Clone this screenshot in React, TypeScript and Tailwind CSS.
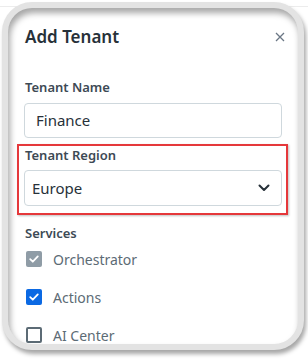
import React from "react";

function Check({ color }: { color: string }) {
  return (
    <span
      className="flex h-[16px] w-[16px] items-center justify-center rounded-[2px]"
      style={{ backgroundColor: color }}
    >
      <svg width="12" height="12" viewBox="0 0 12 12" fill="none">
        <path d="M2.2 6.2 L4.8 8.7 L9.8 3.4" stroke="#ffffff" strokeWidth="1.8" strokeLinecap="round" strokeLinejoin="round" />
      </svg>
    </span>
  );
}

export default function App() {
  return (
    <div className="relative h-[362px] w-[308px] overflow-hidden bg-white" style={{ fontFamily: '"Noto Sans", "Open Sans", sans-serif' }}>
      <div className="absolute left-0 right-0 top-[6px] h-px bg-[#ececec]" />
      <div className="relative ml-[2px] mt-[2px] h-[348px] w-[302px] rounded-[30px] border-[6px] border-[#e3e3e3] bg-white shadow-[2px_4px_4px_rgba(0,0,0,0.35)]">
        <div className="pointer-events-none absolute inset-0 z-10 rounded-[24px] shadow-[inset_2px_5px_6px_rgba(0,0,0,0.35)]" />
        <div className="h-full overflow-hidden rounded-[24px] pl-[16px] pr-[16px] pt-[17px]">
          <div className="flex h-[24px] items-center justify-between pl-[1px]">
            <span className="text-[17px] font-semibold leading-[24px] text-[#273139]">Add Tenant</span>
            <svg width="10" height="10" viewBox="0 0 10 10" className="mr-[-3px]">
              <path d="M1 1 L9 9 M9 1 L1 9" stroke="#6b7785" strokeWidth="1.3" />
            </svg>
          </div>

          <div className="mt-[29px] pl-[1px] text-[13px] font-semibold leading-[18px] text-[#3d4a55]">Tenant Name</div>
          <div className="mt-[7px] flex h-[35px] items-center rounded-[4px] border border-[#cfd8dd] pl-[11px] text-[15px] text-[#273139]">
            Finance
          </div>

          <div className="relative mt-[8px]">
            <div className="pointer-events-none absolute left-[-7px] right-[-6px] top-[-2px] bottom-[-9px] border-2 border-[#e5383b] shadow-[1px_1px_2px_rgba(0,0,0,0.25)]" />
            <div className="pl-[1px] text-[13px] font-semibold leading-[18px] text-[#3d4a55]">Tenant Region</div>
            <div className="mt-[6px] flex h-[36px] items-center justify-between rounded-[4px] border border-[#cfd8dd] pl-[7px] pr-[11px] text-[15px] text-[#273139]">
              <span>Europe</span>
              <svg width="12" height="8" viewBox="0 0 12 8" fill="none">
                <path d="M1.5 1.5 L6 6 L10.5 1.5" stroke="#273139" strokeWidth="2" strokeLinecap="round" strokeLinejoin="round" />
              </svg>
            </div>
          </div>

          <div className="mt-[18px] pl-[1px] text-[13px] font-semibold leading-[18px] text-[#3d4a55]">Services</div>

          <div className="mt-[9px] flex flex-col gap-[22px] pl-[2px]">
            <div className="flex h-[16px] items-center gap-[11px]">
              <Check color="#8f9ca6" />
              <span className="text-[14px] text-[#5c6b75]">Orchestrator</span>
            </div>
            <div className="flex h-[16px] items-center gap-[11px]">
              <Check color="#0b69e3" />
              <span className="text-[14px] text-[#5c6b75]">Actions</span>
            </div>
            <div className="flex h-[16px] items-center gap-[11px]">
              <span className="h-[16px] w-[16px] rounded-[2px] border-2 border-[#5c6b75] bg-white" />
              <span className="text-[14px] text-[#5c6b75]">AI Center</span>
            </div>
          </div>
        </div>
      </div>
    </div>
  );
}
